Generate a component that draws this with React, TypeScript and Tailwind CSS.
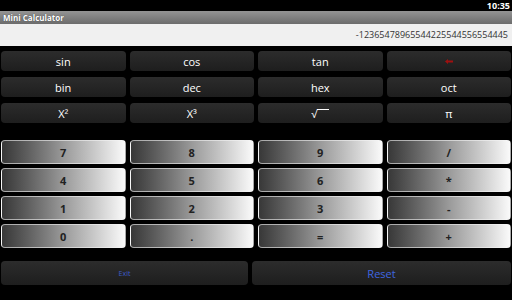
const fnKeys = ['sin', 'cos', 'tan', '⬅', 'bin', 'dec', 'hex', 'oct', 'X²', 'X³', '√‾‾', 'π'];
const numKeys = ['7', '8', '9', '/', '4', '5', '6', '*', '1', '2', '3', '-', '0', '.', '=', '+'];

export default function App() {
  return (
    <div
      className="flex h-[300px] w-[512px] flex-col overflow-hidden bg-black"
      style={{ fontFamily: '"Open Sans", "DejaVu Sans", sans-serif' }}
    >
      <div className="flex h-[11px] items-center justify-end pr-[2px] text-[9px] font-bold leading-none text-white">
        10:35
      </div>
      <div className="flex h-[13px] items-center bg-gradient-to-b from-[#949494] to-[#6c6c6c] pl-[3px] text-[8px] font-bold leading-none text-white [text-shadow:0_0_1px_#333]">
        Mini Calculator
      </div>
      <div className="flex h-[22px] items-center justify-end bg-[#f0f0f0] pr-[4px] text-[9px] text-[#333]">
        -12365478965544225544556554445
      </div>

      <div className="mt-[5px] grid grid-cols-4 gap-x-[4px] gap-y-[6px] px-[1px]">
        {fnKeys.map((k) => (
          <button
            key={k}
            className="flex h-[20px] items-center justify-center rounded-[4px] bg-gradient-to-b from-[#2c2c2c] to-[#1e1e1e] text-[11px] leading-none text-white"
          >
            {k === '⬅' ? (
              <svg width="8" height="5" viewBox="0 0 8 5">
                <path d="M0 2.5 L3 0 V1.5 H8 V3.5 H3 V5 Z" fill="#a01010" />
              </svg>
            ) : k === '√‾‾' ? (
              <span className="flex items-end">
                <span>√</span>
                <span className="mb-[9px] block h-[1px] w-[12px] bg-white" />
              </span>
            ) : (
              k
            )}
          </button>
        ))}
      </div>

      <div className="mt-[17px] grid grid-cols-4 gap-[4px] px-[1px]">
        {numKeys.map((k) => (
          <button
            key={k}
            className="flex h-[24px] items-center justify-center rounded-[4px] border border-[#f4f4f4]/60 bg-gradient-to-r from-[#383838] via-[#9a9a9a] to-[#fafafa] text-[11px] font-bold leading-none text-[#222]"
          >
            {k}
          </button>
        ))}
      </div>

      <div className="mt-[13px] flex gap-[4px] px-[1px]">
        <button className="flex h-[24px] w-[247px] items-center justify-center rounded-[4px] bg-gradient-to-b from-[#2c2c2c] to-[#1e1e1e] text-[7px] leading-none text-[#3d5bc9]">
          Exit
        </button>
        <button className="flex h-[24px] flex-1 items-center justify-center rounded-[4px] bg-gradient-to-b from-[#2c2c2c] to-[#1e1e1e] text-[11px] leading-none text-[#3f66e0]">
          Reset
        </button>
      </div>
    </div>
  );
}
